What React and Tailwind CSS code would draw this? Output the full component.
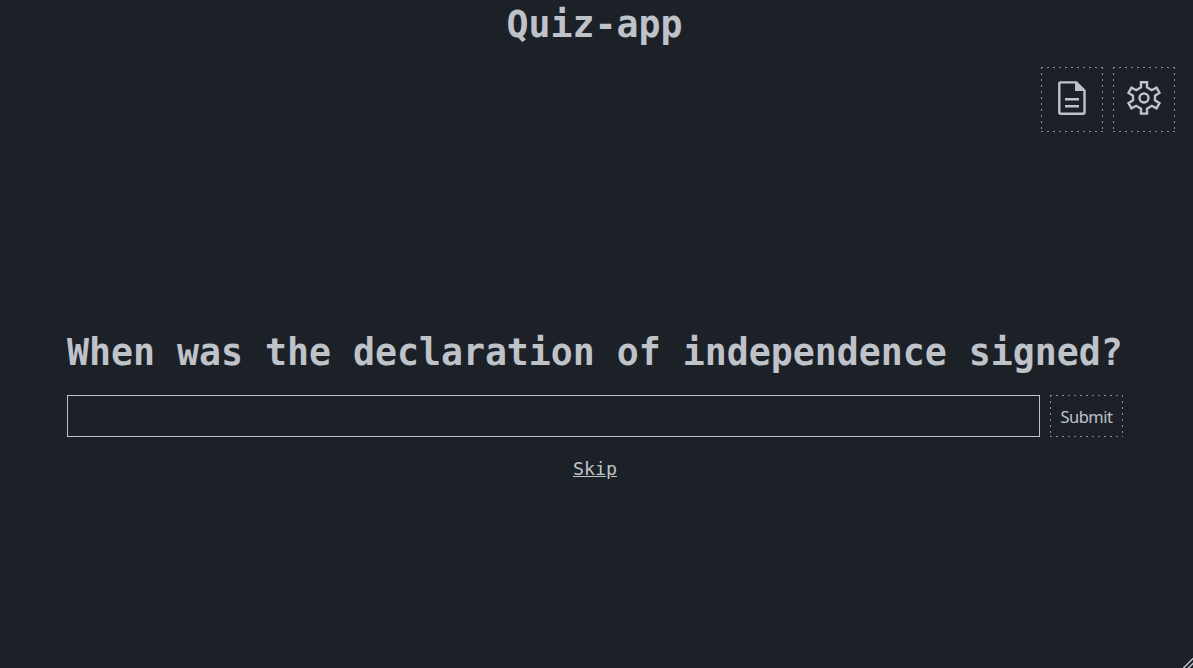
function Dashed({ children, className, onClick, label }) {
  return (
    <button
      type="button"
      aria-label={label}
      onClick={onClick}
      className={
        "flex items-center justify-center border border-transparent bg-origin-border bg-no-repeat bg-[image:repeating-linear-gradient(90deg,#8a8d90_0_2px,transparent_2px_6px),repeating-linear-gradient(90deg,#8a8d90_0_2px,transparent_2px_6px),repeating-linear-gradient(180deg,#8a8d90_0_2px,transparent_2px_6px),repeating-linear-gradient(180deg,#8a8d90_0_2px,transparent_2px_6px)] bg-size-[100%_1px,100%_1px,1px_100%,1px_100%] bg-position-[left_top,left_bottom,left_top,right_top] " +
        className
      }
    >
      {children}
    </button>
  );
}

export default function App() {
  return (
    <div className="relative flex h-screen w-full flex-col overflow-hidden bg-[#1c2128] font-['DejaVu_Sans_Mono','Liberation_Mono',monospace] text-[#bfc3c9]">
      <h1 className="h-[47px] pt-px pr-[4px] text-center text-[36.54px] leading-[47px] font-bold">Quiz-app</h1>
      <nav className="mt-5 flex justify-end gap-[10px] pr-[18px]">
        <Dashed label="Results" className="h-[65px] w-[62px] pb-[3px]">
          <svg width="40" height="40" viewBox="0 0 40 40" fill="none" stroke="currentColor" strokeWidth="2.4" strokeLinejoin="round">
            <path d="M8.4 4.400H24.200L32.500 12.700V34.600A1.100 1.100 0 0 1 31.400 35.700H8.400A1.100 1.100 0 0 1 7.300 34.600V5.500A1.100 1.100 0 0 1 8.400 4.400Z" />
            <path d="M23 4V13H32.500V12L24.500 4Z" fill="currentColor" stroke="none" />
            <path d="M13 21.300H27M13 28.300H27" />
          </svg>
        </Dashed>
        <Dashed label="Settings" className="h-[65px] w-[62px] pb-[3px]">
          <svg width="40" height="40" viewBox="0 0 40 40" fill="none" stroke="currentColor" strokeWidth="2.4">
            <path d="M17 4.200h6v5.200l4.800 2.800 4.700-2.600 3 5.300-4.500 2.700v4.800l4.500 2.700-3 5.300-4.700-2.600-4.800 2.800V35.600h-6v-5l-4.800-2.800-4.700 2.600-3-5.300 4.500-2.700v-4.800l-4.500-2.700 3-5.300 4.700 2.600 4.800-2.800Z" />
            <circle cx="20" cy="20" r="4.500" />
          </svg>
        </Dashed>
      </nav>
      <main className="mt-[197px] ml-[-3px] flex w-[1056px] flex-col items-center self-center">
        <h2 className="h-[47px] w-full text-[36.54px] leading-[47px] font-bold whitespace-nowrap">
          When was the declaration of independence signed?
        </h2>
        <form className="mt-[19px] flex w-full gap-[10px]" onSubmit={(e) => e.preventDefault()}>
          <input aria-label="Answer" className="h-[42px] w-[973px] border border-[#bfc3c9] bg-transparent px-2 outline-none" />
          <Dashed className="h-[42px] w-[73px] pt-[2px] font-['Noto_Sans',sans-serif] text-[16.5px] tracking-[-0.5px]">Submit</Dashed>
        </form>
        <a href="#" className="mt-[21px] text-[18.27px] leading-[22px] underline">Skip</a>
      </main>
      <svg className="absolute right-0 bottom-0" width="10" height="10" viewBox="0 0 10 10" stroke="currentColor" strokeWidth="1.5">
        <path d="M0 10.500L10.500 0M5 10.500L10.500 5" />
      </svg>
    </div>
  );
}
